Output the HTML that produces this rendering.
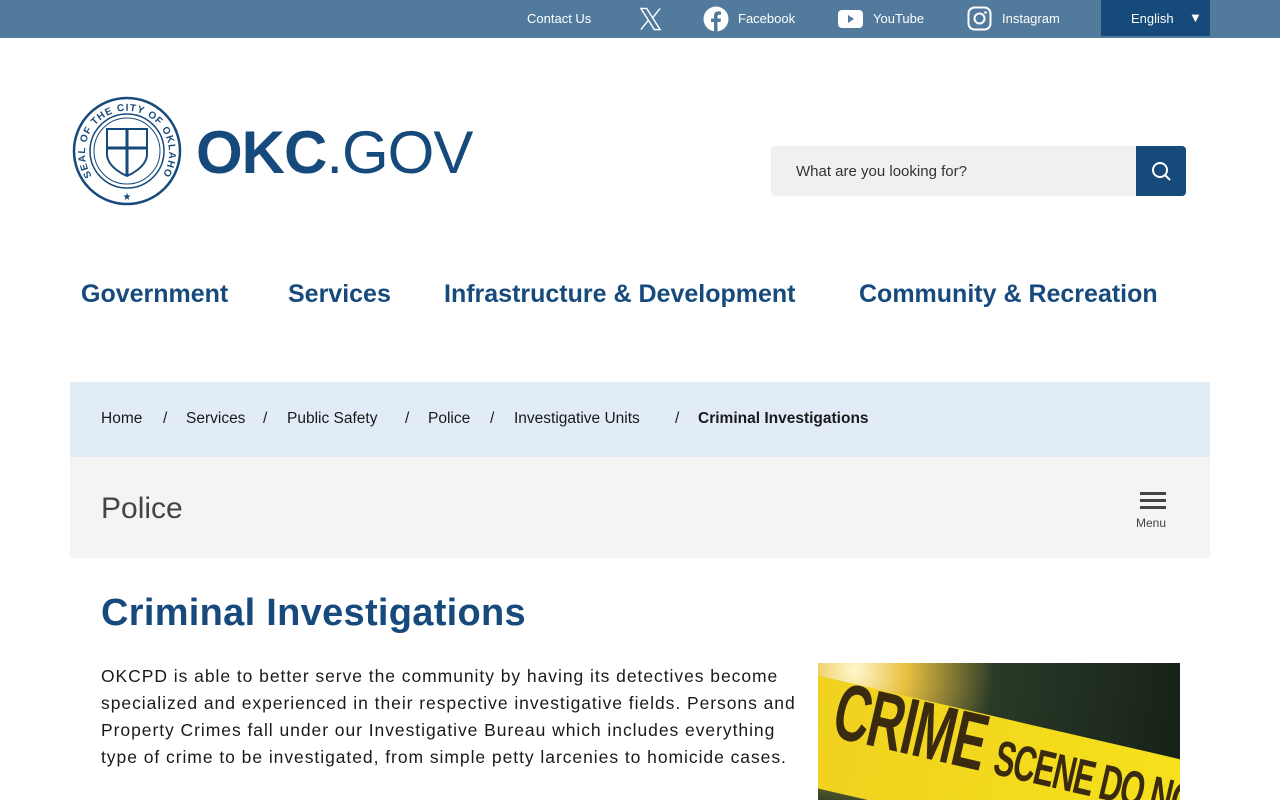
<!DOCTYPE html>
<html><head><meta charset="utf-8"><style>
*{margin:0;padding:0;box-sizing:border-box}
body{width:1280px;height:800px;overflow:hidden;background:#fff;font-family:"Liberation Sans",sans-serif;color:#1a1a1a}
.top{height:38px;background:#517a9c;position:relative;color:#fff;font-size:13px}
.top span{position:absolute;top:11px}
.lang{position:absolute;left:1101px;top:0;width:109px;height:36px;background:#154a7b;color:#fff;font-size:13px}
.nav a{position:absolute;top:280px;font-size:25px;font-weight:bold;color:#174a7c;text-decoration:none}
.crumb{position:absolute;left:70px;top:382px;width:1140px;height:75px;background:#e2ecf6}
.bc{position:absolute;top:410px;font-size:15.5px;white-space:nowrap}
.pol{position:absolute;left:70px;top:457px;width:1140px;height:101px;background:#f4f4f4}
h1{position:absolute;left:101px;top:592px;font-size:38px;color:#174a7c;font-weight:bold;letter-spacing:0.3px}
p{position:absolute;left:101px;top:663px;white-space:nowrap;font-size:17.5px;line-height:27px;letter-spacing:0.95px}
</style></head><body>
<div class="top">
<span style="left:527px">Contact Us</span>
<svg style="position:absolute;left:639px;top:7px" width="23" height="24" viewBox="0 0 24 24"><path d="M2 1h6l14 22h-6z M2 23L10 13 M22 1L14 11" stroke="#fff" stroke-width="1.5" fill="none"/></svg>
<svg style="position:absolute;left:703px;top:6px" width="26" height="26" viewBox="0 0 26 26"><circle cx="13" cy="13" r="12.5" fill="#fff"/><path d="M14.5 26V16h3l.5-3.5h-3.5v-2c0-1 .4-1.7 1.8-1.7H18V5.6c-.5-.1-1.5-.2-2.6-.2-2.7 0-4.4 1.6-4.4 4.5v2.6H8V16h3v10z" fill="#517a9c"/></svg>
<span style="left:738px">Facebook</span>
<svg style="position:absolute;left:838px;top:10px" width="25" height="18" viewBox="0 0 25 18"><rect width="25" height="18" rx="4" fill="#fff"/><path d="M10 5v8l6-4z" fill="#517a9c"/></svg>
<span style="left:873px">YouTube</span>
<svg style="position:absolute;left:967px;top:6px" width="25" height="25" viewBox="0 0 25 25"><rect x="1.5" y="1.5" width="22" height="22" rx="6" stroke="#fff" stroke-width="2" fill="none"/><circle cx="12.5" cy="12.5" r="5" stroke="#fff" stroke-width="2" fill="none"/><circle cx="18.5" cy="6.5" r="1.3" fill="#fff"/></svg>
<span style="left:1002px">Instagram</span>
<div class="lang"><span style="left:30px;top:11px">English</span><span style="left:88px;top:10px;font-size:13px">▼</span></div>
</div>
<svg style="position:absolute;left:72px;top:96px" width="110" height="110" viewBox="0 0 110 110">
<circle cx="55" cy="55" r="53" stroke="#174a7c" stroke-width="2.5" fill="none"/><circle cx="55" cy="55" r="37" stroke="#174a7c" stroke-width="1.5" fill="none"/><circle cx="55" cy="55" r="33" stroke="#174a7c" stroke-width="1" fill="none"/>
<path d="M35 33h40v25c0 14-20 22-20 22s-20-8-20-22z" stroke="#174a7c" stroke-width="2" fill="none"/><path d="M55 33v47M35 52h40" stroke="#174a7c" stroke-width="3"/>
<text x="55" y="104" font-size="10" text-anchor="middle" fill="#174a7c">★</text>
<path id="arc" d="M20 80 A42 42 0 1 1 90 80" fill="none"/><text font-size="10" fill="#174a7c" font-weight="bold" letter-spacing="1"><textPath href="#arc">SEAL OF THE CITY OF OKLAHOMA CITY</textPath></text>
</svg>
<div style="position:absolute;left:196px;top:118px;font-size:60px;color:#174a7c;letter-spacing:-1px"><b style="font-weight:900">OKC</b>.GOV</div>
<div style="position:absolute;left:771px;top:146px;width:366px;height:50px;background:#eff1f1;border-radius:4px 0 0 4px;font-size:15px;padding:17px 25px;color:#333">What are you looking for?</div>
<div style="position:absolute;left:1136px;top:146px;width:50px;height:50px;background:#154a7b;border-radius:0 4px 4px 0"><svg width="50" height="50" viewBox="0 0 50 50"><circle cx="24" cy="24" r="7" stroke="#fff" stroke-width="2" fill="none"/><path d="M29 29l5 5" stroke="#fff" stroke-width="2"/></svg></div>
<div class="nav"><a style="left:81px">Government</a><a style="left:288px">Services</a><a style="left:444px">Infrastructure &amp; Development</a><a style="left:859px">Community &amp; Recreation</a></div>
<div class="crumb"></div>
<span class="bc" style="left:101px">Home</span><span class="bc" style="left:163px">/</span><span class="bc" style="left:186px">Services</span><span class="bc" style="left:263px">/</span><span class="bc" style="left:287px">Public Safety</span><span class="bc" style="left:405px">/</span>
<span class="bc" style="left:428px">Police</span><span class="bc" style="left:490px">/</span><span class="bc" style="left:514px">Investigative Units</span><span class="bc" style="left:675px">/</span><b class="bc" style="left:698px">Criminal Investigations</b>
<div class="pol"><div style="position:absolute;left:31px;top:35px;font-size:30px;color:#444">Police</div>
<div style="position:absolute;left:1070px;top:35px;width:26px"><div style="height:3px;background:#444;margin-bottom:4px"></div><div style="height:3px;background:#444;margin-bottom:4px"></div><div style="height:3px;background:#444"></div></div>
<div style="position:absolute;left:1066px;top:59px;font-size:12px;color:#444">Menu</div></div>
<h1>Criminal Investigations</h1>
<p>OKCPD is able to better serve the community by having its detectives become<br>specialized and experienced in their respective investigative fields. Persons and<br>Property Crimes fall under our Investigative Bureau which includes everything<br>type of crime to be investigated, from simple petty larcenies to homicide cases.</p>
<div style="position:absolute;left:818px;top:663px;width:362px;height:137px;overflow:hidden;background:radial-gradient(circle at 10% 5%,#fff8d0 0,#e8c040 15%,#2a3a28 40%,#152015 100%)">
<div style="position:absolute;left:-20px;top:8px;width:440px;height:110px;background:linear-gradient(90deg,#f0d020,#f6e31a);transform:rotate(13deg);transform-origin:0 0"></div>
<div style="position:absolute;left:28px;top:2px;font:bold 80px 'Liberation Sans Narrow','Liberation Sans',sans-serif;color:#3a2a10;transform:rotate(13deg) scaleX(.62);transform-origin:0 0;white-space:nowrap;letter-spacing:-2px">CRIME <span style="font-size:50px">SCENE DO NOT CROSS</span></div>
</div>
</body></html>
